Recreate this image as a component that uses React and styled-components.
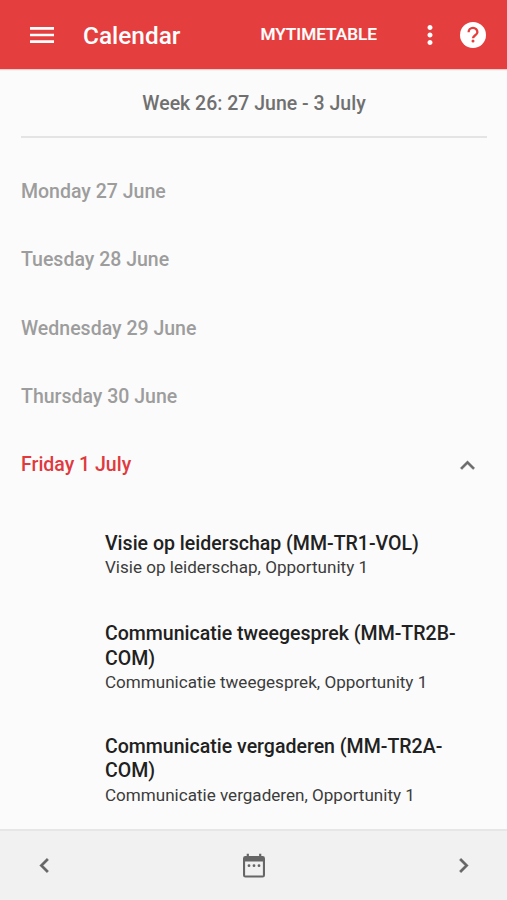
import React from 'react';
import styled, { createGlobalStyle } from 'styled-components';

const GlobalStyle = createGlobalStyle`
  *, *::before, *::after { box-sizing: border-box; }
  body { margin: 0; background: #fbfbfb; font-family: Roboto, "Liberation Sans", sans-serif; }
`;

const Screen = styled.div`
  display: flex;
  flex-direction: column;
  height: 100vh;
  min-height: 900px;
  overflow: hidden;
  background: #fbfbfb;
`;

const TopBar = styled.header`
  display: flex;
  align-items: center;
  flex: none;
  height: 69px;
  padding: 0 19px 0 26px;
  background: #e53e3e;
  color: #fff;
  box-shadow: 0 1px 1px rgba(229, 62, 62, 0.25);
`;

const IconButton = styled.button`
  display: flex;
  flex: none;
  padding: 0;
  border: 0;
  background: none;
  color: inherit;
`;

const Glyph = styled.svg`
  display: block;
  flex: none;
  fill: currentColor;
  stroke: currentColor;
  stroke-width: ${({ $weight }) => $weight || 0};
`;

const Title = styled.h1`
  flex: 1;
  margin: 2px 0 0 25px;
  font-size: 24.4px;
  font-weight: 500;
  line-height: 32px;
`;

const TimetableButton = styled.button`
  margin: 0 38px 1px 0;
  padding: 0;
  border: 0;
  background: none;
  color: inherit;
  font: 500 17.2px/24px Roboto, sans-serif;
  -webkit-text-stroke: 0.2px currentColor;
`;

const TopActions = styled.div`
  display: flex;
  align-items: center;
  gap: 13px;
`;

const WeekHeading = styled.h2`
  flex: none;
  margin: 0 20px 0 21px;
  height: 69px;
  border-bottom: 2px solid #e4e4e4;
  color: #707070;
  text-align: center;
  font-size: 19.5px;
  font-weight: 500;
  line-height: 70px;
`;

const Days = styled.main`
  flex: 1;
  min-height: 0;
  padding: 19.7px 20px 0 21px;
`;

const DayRow = styled.div`
  display: flex;
  align-items: center;
  justify-content: space-between;
  height: 68.4px;
  padding-right: 5px;
  color: ${({ $active }) => ($active ? '#e0393e' : '#9d9d9d')};
  font-size: 19.5px;
  font-weight: 500;
  line-height: 24px;
`;

const Chevron = styled.span`
  display: flex;
  color: #6b6b6b;
`;

const Events = styled.ul`
  margin: 0;
  padding: 32.3px 0 0 84px;
  list-style: none;
`;

const Event = styled.li`
  min-height: 90.4px;
  padding-bottom: 41.6px;
`;

const EventTitle = styled.h3`
  margin: 0;
  color: #212121;
  font-size: 19.55px;
  font-weight: 500;
  line-height: 24.4px;
`;

const EventDetail = styled.p`
  margin: 0;
  color: #3c3c3c;
  font-size: 17.07px;
  line-height: 22px;
`;

const BottomBar = styled.nav`
  display: flex;
  flex: none;
  align-items: center;
  justify-content: space-between;
  height: 71px;
  padding: 0 29.5px 0 30px;
  border-top: 2px solid #e6e6e6;
  background: #f1f1f1;
  color: #666;
`;

const icons = {
  menu: 'M3 18h18v-2H3v2zm0-5h18v-2H3v2zm0-7v2h18V6H3z',
  more: 'M12 8c1.1 0 2-.9 2-2s-.9-2-2-2-2 .9-2 2 .9 2 2 2zm0 2c-1.1 0-2 .9-2 2s.9 2 2 2 2-.9 2-2-.9-2-2-2zm0 6c-1.1 0-2 .9-2 2s.9 2 2 2 2-.9 2-2-.9-2-2-2z',
  up: 'M12 8l-6 6 1.41 1.41L12 10.83l4.59 4.58L18 14z',
  left: 'M15.41 7.41L14 6l-6 6 6 6 1.41-1.41L10.83 12z',
  right: 'M10 6L8.59 7.41 13.17 12l-4.58 4.59L10 18l6-6z',
};

const Icon = ({ name, size, weight }) => (
  <Glyph width={size} height={size} viewBox="0 0 24 24" $weight={weight} aria-hidden="true">
    <path d={icons[name]} />
  </Glyph>
);

const HelpIcon = () => (
  <Glyph width="30" height="30" viewBox="0 0 30 30" aria-hidden="true">
    <circle cx="15" cy="15" r="13" />
    <path
      d="M10.6 12.2a4.4 4.4 0 0 1 8.8 0c0 2.9-4.4 3.2-4.4 6.1"
      fill="none"
      stroke="#e53e3e"
      strokeWidth="2.3"
    />
    <circle cx="15" cy="21.1" r="1.5" fill="#e53e3e" />
  </Glyph>
);

const CalendarIcon = () => (
  <Glyph width="28" height="28" viewBox="0 0 28 28" aria-hidden="true">
    <path
      fillRule="evenodd"
      d="M6.7 1.7h2.2V4h10.2V1.7h2.2V4h1.3A2.4 2.4 0 0 1 25 6.4v16.8a2.4 2.4 0 0 1-2.4 2.4H5.4A2.4 2.4 0 0 1 3 23.2V6.4A2.4 2.4 0 0 1 5.4 4h1.3zM5.1 9.6v13.9h17.8V9.6z"
    />
    <circle cx="9" cy="13.7" r="1.4" />
    <circle cx="14" cy="13.7" r="1.4" />
    <circle cx="19" cy="13.7" r="1.4" />
  </Glyph>
);

const days = ['Monday 27 June', 'Tuesday 28 June', 'Wednesday 29 June', 'Thursday 30 June'];

const events = [
  { title: 'Visie op leiderschap (MM-TR1-VOL)', detail: 'Visie op leiderschap, Opportunity 1' },
  { title: 'Communicatie tweegesprek (MM-TR2B-COM)', detail: 'Communicatie tweegesprek, Opportunity 1' },
  { title: 'Communicatie vergaderen (MM-TR2A-COM)', detail: 'Communicatie vergaderen, Opportunity 1' },
];

export default function App() {
  return (
    <Screen>
      <GlobalStyle />
      <TopBar>
        <IconButton aria-label="Menu"><Icon name="menu" size={32} /></IconButton>
        <Title>Calendar</Title>
        <TimetableButton>MYTIMETABLE</TimetableButton>
        <TopActions>
          <IconButton aria-label="More"><Icon name="more" size={30} /></IconButton>
          <IconButton aria-label="Help"><HelpIcon /></IconButton>
        </TopActions>
      </TopBar>
      <WeekHeading>Week 26: 27 June - 3 July</WeekHeading>
      <Days>
        {days.map((day) => <DayRow key={day}>{day}</DayRow>)}
        <DayRow $active>
          Friday 1 July
          <Chevron><Icon name="up" size={29} weight={0.3} /></Chevron>
        </DayRow>
        <Events>
          {events.map(({ title, detail }) => (
            <Event key={title}>
              <EventTitle>{title}</EventTitle>
              <EventDetail>{detail}</EventDetail>
            </Event>
          ))}
        </Events>
      </Days>
      <BottomBar>
        <IconButton aria-label="Previous week"><Icon name="left" size={29} weight={0.3} /></IconButton>
        <IconButton aria-label="Today"><CalendarIcon /></IconButton>
        <IconButton aria-label="Next week"><Icon name="right" size={29} weight={0.3} /></IconButton>
      </BottomBar>
    </Screen>
  );
}
